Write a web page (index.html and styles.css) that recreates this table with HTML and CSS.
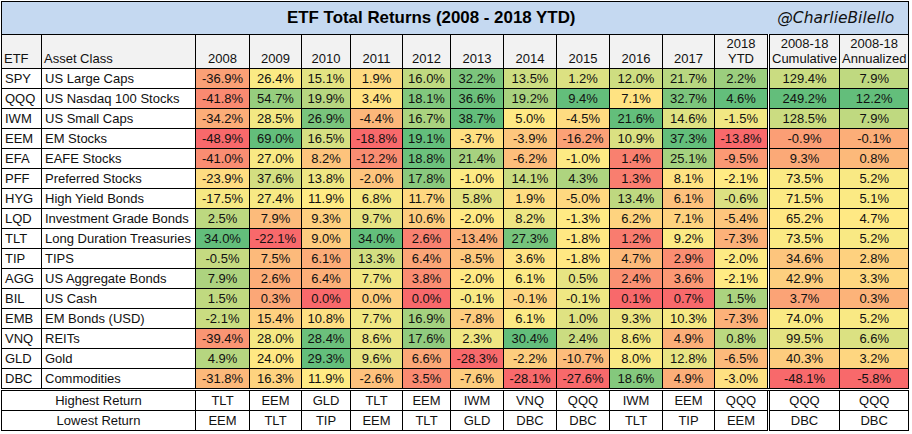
FILE: index.html
```html
<!DOCTYPE html>
<html lang="en">
<head>
<meta charset="utf-8">
<title>ETF Total Returns (2008 - 2018 YTD)</title>
<link rel="stylesheet" href="styles.css">
</head>
<body>
<table class="grid">
  <colgroup>
    <col class="w-etf"><col class="w-asset">
    <col class="w54"><col class="w52"><col class="w49"><col class="w52"><col class="w48">
    <col class="w53"><col class="w53"><col class="w53"><col class="w53"><col class="w52">
    <col class="w54"><col class="w70"><col class="w69">
  </colgroup>
  <tr class="title-row">
    <td colspan="15" class="title-cell">
      <div class="title-bar">
        <h1 class="title">ETF Total Returns (2008 - 2018 YTD)</h1>
        <span class="handle">@CharlieBilello</span>
      </div>
    </td>
  </tr>
  <tr class="head">
    <td class="left">ETF</td><td class="left">Asset Class</td>
    <td>2008</td><td>2009</td><td>2010</td><td>2011</td><td>2012</td><td>2013</td>
    <td>2014</td><td>2015</td><td>2016</td><td>2017</td><td>2018<br>YTD</td>
    <td class="cum">2008-18<br>Cumulative</td><td>2008-18<br>Annualized</td>
  </tr>
  <tr class="row"><td class="tk">SPY</td><td class="tk">US Large Caps</td><td class="num">-36.9%</td><td class="num">26.4%</td><td class="num">15.1%</td><td class="num">1.9%</td><td class="num">16.0%</td><td class="num">32.2%</td><td class="num">13.5%</td><td class="num">1.2%</td><td class="num">12.0%</td><td class="num">21.7%</td><td class="num">2.2%</td><td class="num cum">129.4%</td><td class="num">7.9%</td></tr>
  <tr class="row"><td class="tk">QQQ</td><td class="tk">US Nasdaq 100 Stocks</td><td class="num">-41.8%</td><td class="num">54.7%</td><td class="num">19.9%</td><td class="num">3.4%</td><td class="num">18.1%</td><td class="num">36.6%</td><td class="num">19.2%</td><td class="num">9.4%</td><td class="num">7.1%</td><td class="num">32.7%</td><td class="num">4.6%</td><td class="num cum">249.2%</td><td class="num">12.2%</td></tr>
  <tr class="row"><td class="tk">IWM</td><td class="tk">US Small Caps</td><td class="num">-34.2%</td><td class="num">28.5%</td><td class="num">26.9%</td><td class="num">-4.4%</td><td class="num">16.7%</td><td class="num">38.7%</td><td class="num">5.0%</td><td class="num">-4.5%</td><td class="num">21.6%</td><td class="num">14.6%</td><td class="num">-1.5%</td><td class="num cum">128.5%</td><td class="num">7.9%</td></tr>
  <tr class="row"><td class="tk">EEM</td><td class="tk">EM Stocks</td><td class="num">-48.9%</td><td class="num">69.0%</td><td class="num">16.5%</td><td class="num">-18.8%</td><td class="num">19.1%</td><td class="num">-3.7%</td><td class="num">-3.9%</td><td class="num">-16.2%</td><td class="num">10.9%</td><td class="num">37.3%</td><td class="num">-13.8%</td><td class="num cum">-0.9%</td><td class="num">-0.1%</td></tr>
  <tr class="row"><td class="tk">EFA</td><td class="tk">EAFE Stocks</td><td class="num">-41.0%</td><td class="num">27.0%</td><td class="num">8.2%</td><td class="num">-12.2%</td><td class="num">18.8%</td><td class="num">21.4%</td><td class="num">-6.2%</td><td class="num">-1.0%</td><td class="num">1.4%</td><td class="num">25.1%</td><td class="num">-9.5%</td><td class="num cum">9.3%</td><td class="num">0.8%</td></tr>
  <tr class="row"><td class="tk">PFF</td><td class="tk">Preferred Stocks</td><td class="num">-23.9%</td><td class="num">37.6%</td><td class="num">13.8%</td><td class="num">-2.0%</td><td class="num">17.8%</td><td class="num">-1.0%</td><td class="num">14.1%</td><td class="num">4.3%</td><td class="num">1.3%</td><td class="num">8.1%</td><td class="num">-2.1%</td><td class="num cum">73.5%</td><td class="num">5.2%</td></tr>
  <tr class="row"><td class="tk">HYG</td><td class="tk">High Yield Bonds</td><td class="num">-17.5%</td><td class="num">27.4%</td><td class="num">11.9%</td><td class="num">6.8%</td><td class="num">11.7%</td><td class="num">5.8%</td><td class="num">1.9%</td><td class="num">-5.0%</td><td class="num">13.4%</td><td class="num">6.1%</td><td class="num">-0.6%</td><td class="num cum">71.5%</td><td class="num">5.1%</td></tr>
  <tr class="row"><td class="tk">LQD</td><td class="tk">Investment Grade Bonds</td><td class="num">2.5%</td><td class="num">7.9%</td><td class="num">9.3%</td><td class="num">9.7%</td><td class="num">10.6%</td><td class="num">-2.0%</td><td class="num">8.2%</td><td class="num">-1.3%</td><td class="num">6.2%</td><td class="num">7.1%</td><td class="num">-5.4%</td><td class="num cum">65.2%</td><td class="num">4.7%</td></tr>
  <tr class="row"><td class="tk">TLT</td><td class="tk">Long Duration Treasuries</td><td class="num">34.0%</td><td class="num">-22.1%</td><td class="num">9.0%</td><td class="num">34.0%</td><td class="num">2.6%</td><td class="num">-13.4%</td><td class="num">27.3%</td><td class="num">-1.8%</td><td class="num">1.2%</td><td class="num">9.2%</td><td class="num">-7.3%</td><td class="num cum">73.5%</td><td class="num">5.2%</td></tr>
  <tr class="row"><td class="tk">TIP</td><td class="tk">TIPS</td><td class="num">-0.5%</td><td class="num">7.5%</td><td class="num">6.1%</td><td class="num">13.3%</td><td class="num">6.4%</td><td class="num">-8.5%</td><td class="num">3.6%</td><td class="num">-1.8%</td><td class="num">4.7%</td><td class="num">2.9%</td><td class="num">-2.0%</td><td class="num cum">34.6%</td><td class="num">2.8%</td></tr>
  <tr class="row"><td class="tk">AGG</td><td class="tk">US Aggregate Bonds</td><td class="num">7.9%</td><td class="num">2.6%</td><td class="num">6.4%</td><td class="num">7.7%</td><td class="num">3.8%</td><td class="num">-2.0%</td><td class="num">6.1%</td><td class="num">0.5%</td><td class="num">2.4%</td><td class="num">3.6%</td><td class="num">-2.1%</td><td class="num cum">42.9%</td><td class="num">3.3%</td></tr>
  <tr class="row"><td class="tk">BIL</td><td class="tk">US Cash</td><td class="num">1.5%</td><td class="num">0.3%</td><td class="num">0.0%</td><td class="num">0.0%</td><td class="num">0.0%</td><td class="num">-0.1%</td><td class="num">-0.1%</td><td class="num">-0.1%</td><td class="num">0.1%</td><td class="num">0.7%</td><td class="num">1.5%</td><td class="num cum">3.7%</td><td class="num">0.3%</td></tr>
  <tr class="row"><td class="tk">EMB</td><td class="tk">EM Bonds (USD)</td><td class="num">-2.1%</td><td class="num">15.4%</td><td class="num">10.8%</td><td class="num">7.7%</td><td class="num">16.9%</td><td class="num">-7.8%</td><td class="num">6.1%</td><td class="num">1.0%</td><td class="num">9.3%</td><td class="num">10.3%</td><td class="num">-7.3%</td><td class="num cum">74.0%</td><td class="num">5.2%</td></tr>
  <tr class="row"><td class="tk">VNQ</td><td class="tk">REITs</td><td class="num">-39.4%</td><td class="num">28.0%</td><td class="num">28.4%</td><td class="num">8.6%</td><td class="num">17.6%</td><td class="num">2.3%</td><td class="num">30.4%</td><td class="num">2.4%</td><td class="num">8.6%</td><td class="num">4.9%</td><td class="num">0.8%</td><td class="num cum">99.5%</td><td class="num">6.6%</td></tr>
  <tr class="row"><td class="tk">GLD</td><td class="tk">Gold</td><td class="num">4.9%</td><td class="num">24.0%</td><td class="num">29.3%</td><td class="num">9.6%</td><td class="num">6.6%</td><td class="num">-28.3%</td><td class="num">-2.2%</td><td class="num">-10.7%</td><td class="num">8.0%</td><td class="num">12.8%</td><td class="num">-6.5%</td><td class="num cum">40.3%</td><td class="num">3.2%</td></tr>
  <tr class="row last"><td class="tk">DBC</td><td class="tk">Commodities</td><td class="num">-31.8%</td><td class="num">16.3%</td><td class="num">11.9%</td><td class="num">-2.6%</td><td class="num">3.5%</td><td class="num">-7.6%</td><td class="num">-28.1%</td><td class="num">-27.6%</td><td class="num">18.6%</td><td class="num">4.9%</td><td class="num">-3.0%</td><td class="num cum">-48.1%</td><td class="num">-5.8%</td></tr>
  <tr class="foot"><td colspan="2">Highest Return</td><td>TLT</td><td>EEM</td><td>GLD</td><td>TLT</td><td>EEM</td><td>IWM</td><td>VNQ</td><td>QQQ</td><td>IWM</td><td>EEM</td><td>QQQ</td><td class="cum">QQQ</td><td>QQQ</td></tr>
  <tr class="foot"><td colspan="2">Lowest Return</td><td>EEM</td><td>TLT</td><td>TIP</td><td>EEM</td><td>TLT</td><td>GLD</td><td>DBC</td><td>DBC</td><td>TLT</td><td>TIP</td><td>EEM</td><td class="cum">DBC</td><td>DBC</td></tr>
</table>
<script src="script.js"></script>
</body>
</html>
```

FILE: styles.css
```css
html, body {
  margin: 0;
  padding: 0;
  background: #ffffff;
}

body {
  font-family: "Liberation Sans", Arial, sans-serif;
  font-size: 13px;
  color: #111;
}

.grid {
  border-collapse: collapse;
  table-layout: fixed;
  margin: 1px 0 0 1px;
}

.w-etf { width: 40px; }
.w-asset { width: 154px; }
.w48 { width: 48px; }
.w49 { width: 49px; }
.w52 { width: 52px; }
.w53 { width: 53px; }
.w54 { width: 54px; }
.w69 { width: 69px; }
.w70 { width: 70px; }

.grid td {
  border: 1px solid #000;
  padding: 0 2px;
  text-align: center;
  white-space: nowrap;
  overflow: hidden;
}

.title-cell {
  background: #c5d9f1;
  height: 32px;
  padding: 0;
}

.title-bar {
  display: flex;
  align-items: center;
  justify-content: space-between;
}

.title {
  margin: 0 0 0 283px;
  font-size: 16.9px;
  font-weight: bold;
  color: #000;
}

.handle {
  margin-right: 12px;
  font-family: "DejaVu Sans", "Open Sans", sans-serif;
  font-style: italic;
  font-size: 15.5px;
  color: #111;
}

.head td {
  background: #f2f2f2;
  height: 31px;
  padding-bottom: 2px;
  vertical-align: bottom;
  line-height: 15px;
}

.head td.left {
  text-align: left;
}

.row td {
  line-height: 19px;
}

.row td.tk {
  text-align: left;
  background: #fff;
  padding-left: 3px;
}

.grid .last td {
  border-bottom: 3px double #000;
}

.grid .cum {
  border-left: 3px double #000;
}

.foot td {
  line-height: 19px;
  background: #fff;
}
```

FILE: script.js
```js
(function () {
  var RED = [248, 105, 107];
  var YEL = [255, 235, 132];
  var GRN = [99, 190, 123];

  function mix(a, b, t) {
    return a.map(function (v, i) { return Math.round(v + (b[i] - v) * t); });
  }

  var rows = Array.prototype.slice.call(document.querySelectorAll('tr.row'));
  var ncols = rows[0].querySelectorAll('td.num').length;

  for (var c = 0; c < ncols; c++) {
    var cells = rows.map(function (r) { return r.querySelectorAll('td.num')[c]; });
    var vals = cells.map(function (td) { return parseFloat(td.textContent); });
    var s = vals.slice().sort(function (a, b) { return a - b; });
    var pos = (s.length - 1) * 0.5;
    var lo = Math.floor(pos);
    var mid = s[lo] + (s[Math.ceil(pos)] - s[lo]) * (pos - lo);
    var min = s[0];
    var max = s[s.length - 1];
    cells.forEach(function (td, i) {
      var v = vals[i];
      var col;
      if (v <= mid) {
        col = mix(RED, YEL, mid === min ? 1 : (v - min) / (mid - min));
      } else {
        col = mix(YEL, GRN, (v - mid) / (max - mid));
      }
      td.style.backgroundColor = 'rgb(' + col.join(',') + ')';
    });
  }
})();
```
